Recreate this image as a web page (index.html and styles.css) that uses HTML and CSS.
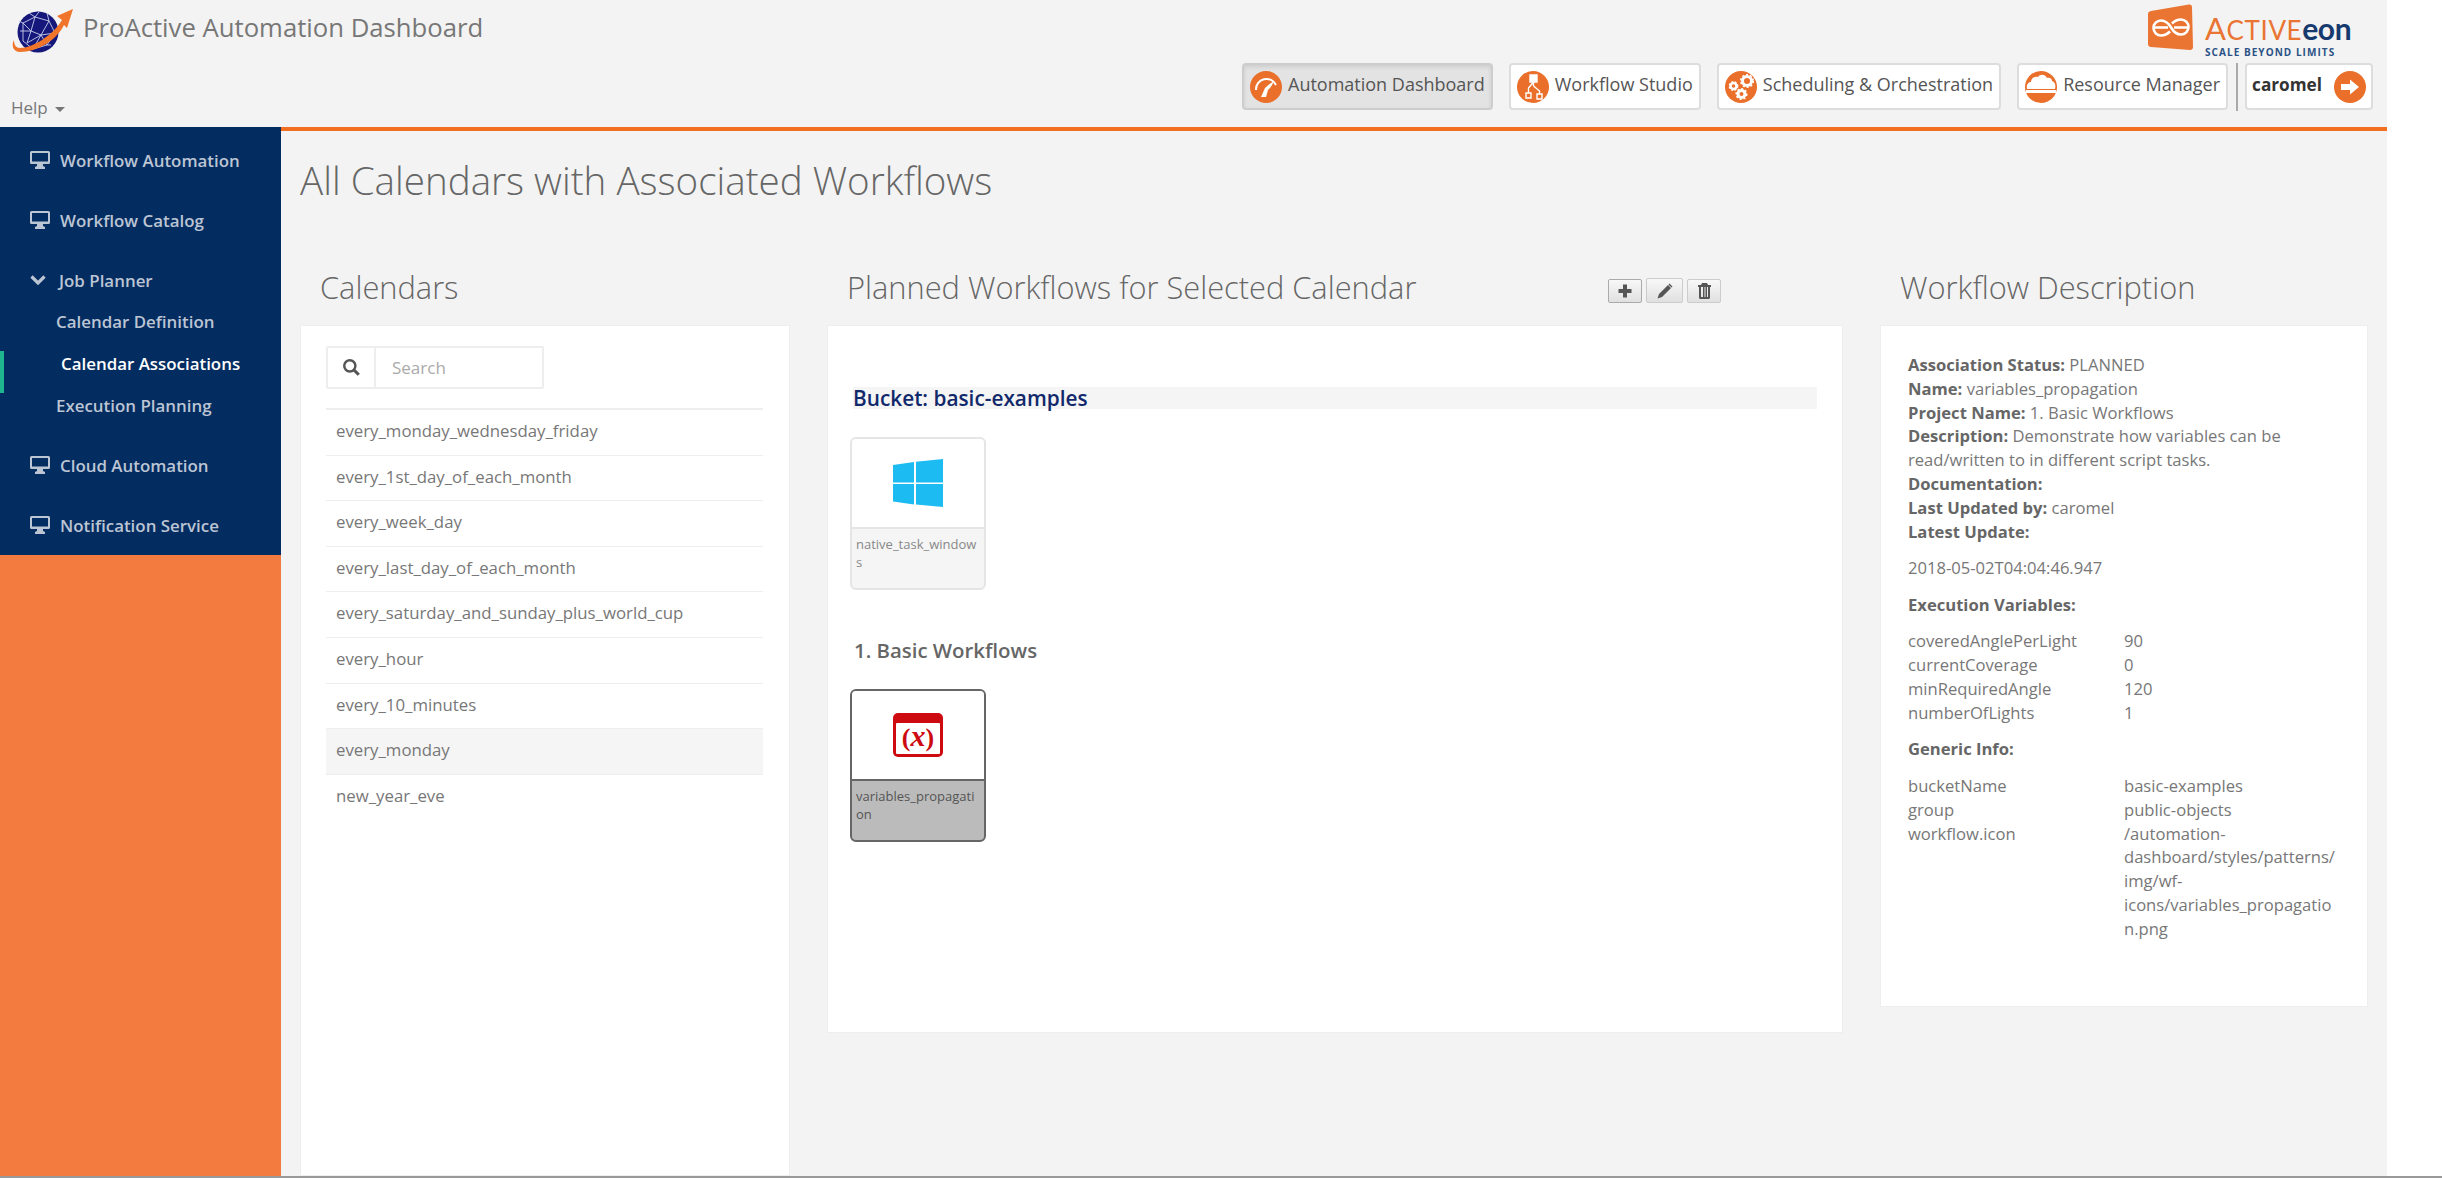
FILE: index.html
```html
<!DOCTYPE html>
<html lang="en">
<head>
<meta charset="utf-8">
<title>ProActive Automation Dashboard</title>
<link rel="stylesheet" href="styles.css">
</head>
<body>
<svg class="defs" width="0" height="0">
  <symbol id="monitor" viewBox="0 0 20 18"><path fill="currentColor" fill-rule="evenodd" d="M1.500 0h17A1.500 1.500 0 0 1 20 1.500v10a1.500 1.500 0 0 1-1.500 1.500H13v2l2 1v2H5v-2l2-1v-2H1.500A1.500 1.500 0 0 1 0 11.500v-10A1.500 1.500 0 0 1 1.500 0zM2 2v8.500h16V2z"/></symbol>
</svg>
<div class="page">
  <header class="topbar">
    <div class="brand">
      <div class="brand-row">
        <svg class="globe" width="64" height="48" viewBox="0 0 64 48">
          <ellipse cx="27" cy="25" rx="20.500" ry="20.500" fill="#15177a"/>
          <path d="M12 16l12-6 14 4 6 12-8 12-14 4-10-8zM24 10l-4 14 10 4 8-14M20 24l-8-8M20 24l-4 12M30 28l-8 14M30 28l14-2M30 28l6 10M18 6l6 4M38 14l-2-8M9 24h11M28 5l-4 5M16 36l14-8M12 16l-4-2M36 38h4" fill="none" stroke="#c9cfee" stroke-width=".9"/>
          <path d="M3 33C0 38 2 45 9 45c17 0 37-12 44-27l3 3 6-19-16 7 5 4C42 28 22 41 9 41c-4 0-6-3-6-8z" fill="#f0752a"/>
        </svg>
        <span class="brand-title">ProActive Automation Dashboard</span>
      </div>
      <div class="help">Help <span class="caret"></span></div>
    </div>
    <div class="top-right">
      <div class="ae-logo">
        <svg class="ae-mark" width="46" height="47" viewBox="0 0 46 47">
          <path d="M3 7L41 0.500q3-.300 3 3L45 43q0 3-3 3L3 43q-3-.300-3-3V10q0-2.500 3-3z" fill="#ea7432"/>
          <path d="M23 23.500c-3-5-6-7-10-7a7.500 7.500 0 0 0 0 15c4 0 7-2 9-4M23 23.500c3 5 6 7 10 7a7.500 7.500 0 0 0 0-15c-4 0-7 2-9 4M6 23.500h14M26 23.500h14" fill="none" stroke="#fff" stroke-width="2.600"/>
        </svg>
        <div class="ae-words">
          <div class="ae-name"><span class="ae-a">A</span>CTIVE<span class="ae-eon">eon</span></div>
          <div class="ae-tag">SCALE BEYOND LIMITS</div>
        </div>
      </div>
      <nav class="apps">
        <a class="app active">
          <svg class="app-ico" viewBox="0 0 32 32"><circle cx="16" cy="16" r="16" fill="#e96f2b"/><path d="M6 19a10.500 10.500 0 0 1 20-5" fill="none" stroke="#fff" stroke-width="2"/><path d="M11 26l4-9q3-3 9-7-3 7-6 9l-2 7z" fill="#fff"/></svg>
          <span class="app-label">Automation Dashboard</span>
        </a>
        <a class="app">
          <svg class="app-ico" viewBox="0 0 32 32"><circle cx="16" cy="16" r="16" fill="#e96f2b"/><path d="M13 4h7v7h-7zM16.500 11v4M16.500 11l-5 6v5M16.500 15l6 5v3M9 22h5v5H9zM20 23h5v5h-5z" fill="none" stroke="#fff" stroke-width="1.400"/><path d="M13 4h7v7h-7z" fill="#fff"/></svg>
          <span class="app-label">Workflow Studio</span>
        </a>
        <a class="app">
          <svg class="app-ico" viewBox="0 0 32 32"><circle cx="16" cy="16" r="16" fill="#e96f2b"/><g fill="none" stroke="#fff"><circle cx="22" cy="10" r="4.500" stroke-width="3"/><circle cx="8.500" cy="15" r="3" stroke-width="2.500"/><circle cx="16.500" cy="23" r="3.500" stroke-width="3"/><circle cx="22" cy="10" r="6.300" stroke-width="1.500" stroke-dasharray="2 2"/><circle cx="16.500" cy="23" r="5.300" stroke-width="1.500" stroke-dasharray="2 2"/><circle cx="8.500" cy="15" r="4.300" stroke-width="1.200" stroke-dasharray="2 1.500"/></g></svg>
          <span class="app-label">Scheduling &amp; Orchestration</span>
        </a>
        <a class="app">
          <svg class="app-ico" viewBox="0 0 32 32"><circle cx="16" cy="16" r="16" fill="#e96f2b"/><path d="M2 18c-1-4 1-7 4-7 0-4 4-6 7-5 2-3 7-3 9 1 3-1 5 1 5 3 3 1 4 4 3 8z" fill="#fff"/><rect x="1" y="19" width="30" height="3" fill="#fff"/></svg>
          <span class="app-label">Resource Manager</span>
        </a>
        <span class="app-sep"></span>
        <a class="app user">
          <b class="app-label">caromel</b>
          <svg class="app-ico" viewBox="0 0 32 32"><circle cx="16" cy="16" r="16" fill="#e96f2b"/><path d="M7 13h9V8.500l9 7.500-9 7.500V19H7z" fill="#fff"/></svg>
        </a>
      </nav>
    </div>
  </header>

  <div class="shell">
    <aside class="sidebar">
      <ul class="side-nav">
        <li class="side-item"><svg class="side-ico"><use href="#monitor"/></svg>Workflow Automation</li>
        <li class="side-item"><svg class="side-ico"><use href="#monitor"/></svg>Workflow Catalog</li>
        <li class="side-item"><svg class="side-chev" viewBox="0 0 16 12"><path d="M1.500 2.500L8 9l6.500-6.500" fill="none" stroke="currentColor" stroke-width="3.200"/></svg>Job Planner</li>
        <li class="side-sub first">Calendar Definition</li>
        <li class="side-sub current">Calendar Associations</li>
        <li class="side-sub">Execution Planning</li>
        <li class="side-item after-sub"><svg class="side-ico"><use href="#monitor"/></svg>Cloud Automation</li>
        <li class="side-item"><svg class="side-ico"><use href="#monitor"/></svg>Notification Service</li>
      </ul>
    </aside>

    <main class="content">
      <h1 class="page-title">All Calendars with Associated Workflows</h1>
      <div class="columns">
        <section class="col">
          <div class="col-head"><h2>Calendars</h2></div>
          <div class="panel panel-list">
            <div class="search">
              <span class="search-btn"><svg width="19" height="19" viewBox="0 0 17 17"><circle cx="7" cy="7" r="5" fill="none" stroke="#555" stroke-width="2.200"/><path d="M10.500 10.500L15 15" stroke="#555" stroke-width="2.800"/></svg></span>
              <span class="search-input">Search</span>
            </div>
            <ul class="cal-list">
              <li>every_monday_wednesday_friday</li>
              <li>every_1st_day_of_each_month</li>
              <li>every_week_day</li>
              <li>every_last_day_of_each_month</li>
              <li>every_saturday_and_sunday_plus_world_cup</li>
              <li>every_hour</li>
              <li>every_10_minutes</li>
              <li class="selected">every_monday</li>
              <li>new_year_eve</li>
            </ul>
          </div>
        </section>

        <section class="col">
          <div class="col-head">
            <h2>Planned Workflows for Selected Calendar</h2>
            <div class="tools">
              <button class="tool tool-add"><svg width="16" height="16" viewBox="0 0 16 16"><path d="M6 1.500h4V6h4.500v4H10v4.500H6V10H1.500V6H6z" fill="#555"/></svg></button>
              <button class="tool tool-edit"><svg width="18" height="18" viewBox="0 0 18 18"><path d="M12 3l3 3-9 9-4.500 1.500L3 12zM13.500 1.500l3 3-1 1-3-3z" fill="#555"/></svg></button>
              <button class="tool"><svg width="15" height="16" viewBox="0 0 15 16"><path fill="#555" fill-rule="evenodd" d="M5 0h5l1 2h3v2h-1v10.500a1.500 1.500 0 0 1-1.500 1.500h-8A1.500 1.500 0 0 1 2 14.500V4H1V2h3zM4 4v10h2V4zm3.500 0v10h1V4zM10 4v10h1V4z"/></svg></button>
            </div>
          </div>
          <div class="panel panel-flow">
            <h3 class="bucket">Bucket: basic-examples</h3>
            <div class="wf-card">
              <div class="wf-thumb">
                <svg width="50" height="48" viewBox="0 0 50 48"><path fill="#1cbcf2" d="M0 6l21-3v20.500H0zM23 2.700L50 0v23.500H23zM0 25h21v20.500L0 42.500zM23 25h27v23l-27-2.500z"/></svg>
              </div>
              <div class="wf-name">native_task_windows</div>
            </div>
            <h4 class="project">1. Basic Workflows</h4>
            <div class="wf-card picked">
              <div class="wf-thumb">
                <svg width="50" height="44" viewBox="0 0 50 44"><rect width="50" height="44" rx="5" fill="#cc0a10"/><rect x="3" y="10" width="44" height="31" rx="1" fill="#fff"/><text x="25" y="33" text-anchor="middle" class="x-glyph">(<tspan class="x-var">x</tspan>)</text></svg>
              </div>
              <div class="wf-name">variables_propagation</div>
            </div>
          </div>
        </section>

        <section class="col">
          <div class="col-head"><h2>Workflow Description</h2></div>
          <div class="panel panel-desc">
            <p class="meta"><b>Association Status:</b> PLANNED<br>
            <b>Name:</b> variables_propagation<br>
            <b>Project Name:</b> 1. Basic Workflows<br>
            <b>Description:</b> Demonstrate how variables can be read/written to in different script tasks.<br>
            <b>Documentation:</b><br>
            <b>Last Updated by:</b> caromel<br>
            <b>Latest Update:</b></p>
            <p class="meta">2018-05-02T04:04:46.947</p>
            <p class="meta"><b>Execution Variables:</b></p>
            <dl class="kv">
              <dt>coveredAnglePerLight</dt><dd>90</dd>
              <dt>currentCoverage</dt><dd>0</dd>
              <dt>minRequiredAngle</dt><dd>120</dd>
              <dt>numberOfLights</dt><dd>1</dd>
            </dl>
            <p class="meta"><b>Generic Info:</b></p>
            <dl class="kv">
              <dt>bucketName</dt><dd>basic-examples</dd>
              <dt>group</dt><dd>public-objects</dd>
              <dt>workflow.icon</dt><dd>/automation-dashboard/styles/patterns/img/wf-icons/variables_propagation.png</dd>
            </dl>
          </div>
        </section>
      </div>
    </main>
  </div>
</div>
<div class="bottom-edge"></div>
</body>
</html>
```
FILE: styles.css
```css
* { box-sizing: border-box; }
html, body { margin: 0; height: 100%; }
body {
  background: #fff;
  font-family: "Open Sans", "Liberation Sans", sans-serif;
  color: #777;
  overflow: hidden;
  display: flex;
  flex-direction: column;
}
.defs { display: block; height: 0; }
.page {
  width: 2387px;
  height: 1176px;
  display: flex;
  flex-direction: column;
  background: #f3f3f3;
}
.bottom-edge { height: 2px; background: #999; }

/* top bar */
.topbar {
  height: 127px;
  flex: none;
  display: flex;
  justify-content: space-between;
}
.brand { display: flex; flex-direction: column; padding: 7px 0 0 11px; }
.brand-row { display: flex; align-items: flex-start; gap: 8px; }
.globe { flex: none; display: block; }
.brand-title { font-size: 25.700px; color: #777; line-height: 42px; }
.help { font-size: 17px; color: #777; margin-top: 41px; line-height: 24px; }
.caret {
  display: inline-block;
  border-top: 5px solid #777;
  border-left: 5px solid transparent;
  border-right: 5px solid transparent;
  vertical-align: middle;
  margin-left: 3px;
}
.top-right { display: flex; flex-direction: column; align-items: flex-end; padding-right: 14px; }
.ae-logo { display: flex; margin: 4px 21px 0 0; gap: 11px; height: 59px; }
.ae-mark { flex: none; }
.ae-words { display: flex; flex-direction: column; width: 147px; }
.ae-name { font-family: Lato, sans-serif; font-size: 26px; line-height: 36px; color: #ea7432; margin-top: 6px; font-weight: 400; letter-spacing: .6px; white-space: nowrap; }
.ae-a { font-size: 31px; }
.ae-eon { color: #173a6e; font-weight: 700; font-size: 30px; letter-spacing: -0.4px; }
.ae-tag { font-size: 10px; font-weight: 700; color: #2b5286; letter-spacing: 1.050px; line-height: 10px; white-space: nowrap; margin: -1px 0 0 0; }
.apps { display: flex; align-items: stretch; height: 48px; }
.app {
  display: flex;
  align-items: center;
  gap: 6px;
  height: 47px;
  padding: 0 6px;
  margin-left: 16px;
  background: #fff;
  border: 2px solid #ddd;
  border-radius: 4px;
  font-size: 18px;
  color: #555;
  white-space: nowrap;
}
.app-label { margin-top: -5px; }
.app.active { background: #e3e3e3; border-color: #cdcdcd; box-shadow: inset 0 2px 4px rgba(0,0,0,.1); }
.app-ico { width: 32px; height: 32px; flex: none; }
.app-sep { width: 2px; height: 48px; background: #aaa; margin-left: 8px; }
.app.user { margin-left: 7px; gap: 12px; padding: 0 5px; color: #333; font-size: 17.200px; }
.app.user b { font-weight: 700; }

/* shell */
.shell { flex: 1; display: flex; min-height: 0; }
.sidebar { width: 281px; flex: none; background: #f47b3f; }
.side-nav {
  list-style: none;
  margin: 0;
  padding: 3px 0 0;
  height: 428px;
  background: #032c60;
  color: #bcc5d4;
  font-size: 16.900px;
  font-weight: 600;
}
.side-item { height: 60px; display: flex; align-items: center; padding-left: 30px; }
.side-ico { width: 20px; height: 18px; margin-right: 10px; flex: none; }
.side-chev { width: 16px; height: 12px; margin-right: 13px; flex: none; }
.side-sub { height: 42px; display: flex; align-items: center; padding-left: 56px; position: relative; }
.side-sub.first { margin-top: -10px; }
.side-sub.current { color: #fff; padding-left: 61px; }
.side-sub.current::before {
  content: "";
  position: absolute;
  left: 0;
  top: 9px;
  width: 4px;
  height: 42px;
  background: #1fb58f;
}
.after-sub { margin-top: 9px; }

/* content */
.content {
  flex: 1;
  min-width: 0;
  border-top: 4px solid #f26f21;
  padding-left: 19px;
  display: flex;
  flex-direction: column;
}
.page-title { margin: 0; font-size: 38.600px; font-weight: 300; color: #666; line-height: 50px; padding-top: 24px; height: 116px; }
.columns {
  flex: 1;
  min-height: 0;
  display: grid;
  grid-template-columns: 490px 1016px 488px;
  column-gap: 37px;
  align-items: start;
}
.col { display: flex; flex-direction: column; height: 100%; }
.col-head { height: 78px; flex: none; display: flex; padding: 20px 0 0 20px; }
.col-head h2 { margin: 0; font-size: 30.800px; line-height: 40px; font-weight: 300; color: #666; white-space: nowrap; }
.tools { display: flex; gap: 4px; margin-left: auto; margin-right: 122px; padding-top: 12px; align-items: flex-start; }
.tool {
  height: 24px;
  width: 34px;
  padding: 0;
  display: flex;
  align-items: center;
  justify-content: center;
  border: 1px solid #ccc;
  border-radius: 2px;
  background: linear-gradient(#f8f8f8, #e0e0e0);
}
.tool-add { border-color: #aaa; }
.tool-edit { width: 37px; margin-top: -1px; height: 25px; }
.panel { background: #fff; border: 1px solid #eee; }
.panel-list { flex: 1; padding: 20px 26px 0 25px; }
.search { display: flex; width: 218px; height: 43px; border: 2px solid #eee; border-radius: 2px; }
.search-btn { width: 48px; border-right: 2px solid #eee; display: flex; align-items: center; justify-content: center; }
.search-input { padding-left: 16px; font-size: 17px; color: #aaa; line-height: 39px; }
.cal-list { list-style: none; margin: 19px 0 0; padding: 0; border-top: 2px solid #eee; font-size: 16.800px; }
.cal-list li { height: 45.600px; border-bottom: 1px solid #eee; padding-left: 10px; line-height: 42px; }
.cal-list li:last-child { border-bottom: 0; }
.cal-list .selected { background: #f5f5f5; }

.panel-flow { height: 708px; padding: 61px 25px 0 22px; }
.bucket {
  margin: 0 0 28px 3px;
  background: #f5f5f5;
  height: 22px;
  font-size: 20.800px;
  line-height: 22px;
  font-weight: 600;
  color: #11296b;
}
.project { margin: 46px 0 25px 4px; font-size: 20.400px; font-weight: 600; color: #666; line-height: 28px; height: 28px; }
.wf-card {
  width: 136px;
  height: 153px;
  border: 2px solid #e5e5e5;
  border-radius: 6px;
  overflow: hidden;
  background: #f5f5f5;
  display: flex;
  flex-direction: column;
}
.wf-thumb { height: 90px; flex: none; background: #fff; border-bottom: 2px solid #e5e5e5; display: flex; align-items: center; justify-content: center; }
.wf-name { font-size: 13px; line-height: 18px; padding: 6px 4px; overflow-wrap: anywhere; color: #888; }
.wf-card.picked { border-color: #666; background: #bbb; }
.picked .wf-thumb { border-bottom-color: #666; }
.picked .wf-name { color: #555; }
.x-glyph { font-family: "Liberation Serif", serif; font-weight: 700; font-size: 26px; fill: #cc0a10; }
.x-var { font-style: italic; font-size: 30px; }

.panel-desc { height: 682px; padding: 27px 29px 0 27px; font-size: 16.600px; line-height: 23.800px; color: #777; }
.meta { margin: 0 0 12.800px; }
.meta b { color: #666; font-weight: 700; }
.kv { margin: 0 0 12.800px; display: grid; grid-template-columns: 216px 1fr; }
.kv dt { font-weight: 400; }
.kv dd { margin: 0; overflow-wrap: anywhere; min-width: 0; }
```
